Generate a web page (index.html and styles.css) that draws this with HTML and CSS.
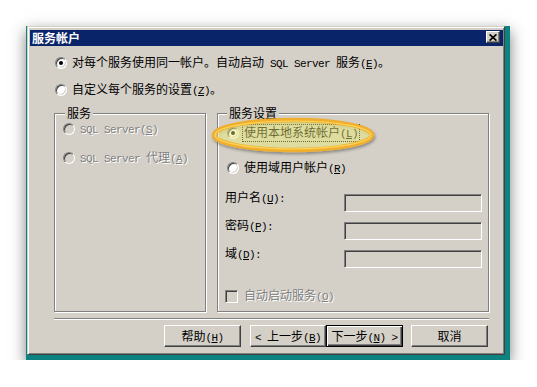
FILE: index.html
```html
<!DOCTYPE html>
<html>
<head>
<meta charset="utf-8">
<link rel="stylesheet" href="styles.css">
</head>
<body>
<div class="frame">
  <div class="dialog">
    <div class="titlebar">
      <span class="title">服务帐户</span>
      <span class="close"><svg width="8" height="7" viewBox="0 0 8 7"><path d="M0.6 0.4 L7.4 6.6 M7.4 0.4 L0.6 6.6" stroke="#000" stroke-width="1.7" fill="none"/></svg></span>
    </div>
    <div class="content">
      <div class="row top-row first"><span class="radio checked"></span><span class="lbl">对每个服务使用同一帐户。自动启动<span class="lat"> SQL Server </span>服务<span class="lat">(<u>E</u>)</span>。</span></div>
      <div class="row top-row second"><span class="radio"></span><span class="lbl">自定义每个服务的设置<span class="lat">(<u>Z</u>)</span>。</span></div>

      <div class="groups">
        <fieldset class="group g-left">
          <legend>服务</legend>
          <div class="row dis l1"><span class="radio"></span><span class="lbl"><span class="lat">SQL Server(<u>S</u>)</span></span></div>
          <div class="row dis l2"><span class="radio"></span><span class="lbl"><span class="lat">SQL Server </span>代理<span class="lat">(<u>A</u>)</span></span></div>
        </fieldset>
        <fieldset class="group g-right">
          <legend>服务设置</legend>
          <div class="row r1"><span class="radio checked"></span><span class="lbl focus">使用本地系统帐户<span class="lat">(<u>L</u>)</span></span></div>
          <div class="row r2"><span class="radio"></span><span class="lbl">使用域用户帐户<span class="lat">(<u>R</u>)</span></span></div>
          <div class="field f1"><span class="flabel">用户名<span class="lat">(<u>U</u>):</span></span><span class="input"></span></div>
          <div class="field"><span class="flabel">密码<span class="lat">(<u>P</u>):</span></span><span class="input"></span></div>
          <div class="field"><span class="flabel">域<span class="lat">(<u>D</u>):</span></span><span class="input"></span></div>
          <div class="row dis chk-row"><span class="check"></span><span class="lbl">自动启动服务<span class="lat">(<u>O</u>)</span></span></div>
        </fieldset>
      </div>

      <div class="sep"></div>

      <div class="buttons">
        <span class="btn">帮助<span class="lat">(<u>H</u>)</span></span>
        <span class="btn back"><span class="lat">&lt; </span>上一步<span class="lat">(<u>B</u>)</span></span>
        <span class="btn default">下一步<span class="lat">(<u>N</u>) &gt;</span></span>
        <span class="btn cancel">取消</span>
      </div>
    </div>

    <svg class="highlight" width="170" height="44" viewBox="0 0 170 44">
      <defs>
        <filter id="sh" x="-10%" y="-30%" width="120%" height="160%">
          <feDropShadow dx="1" dy="2" stdDeviation="1.5" flood-color="#000" flood-opacity="0.35"/>
        </filter>
      </defs>
      <ellipse cx="85" cy="21" rx="79" ry="15" fill="rgba(255,255,120,0.38)" stroke="#f0ae2e" stroke-width="4.5" filter="url(#sh)"/>
      <ellipse cx="85" cy="21" rx="78" ry="14" fill="none" stroke="#ffd65a" stroke-width="1.2"/>
    </svg>
  </div>
</div>
</body>
</html>
```

FILE: styles.css
```css
* { box-sizing: border-box; }
html, body { margin: 0; background: #fff; }
body {
  font-family: "Noto Sans CJK SC", "Noto Sans", sans-serif;
  font-size: 12px;
  color: #000;
}
.lat {
  font-family: "Liberation Mono", monospace;
  font-size: 11px;
  letter-spacing: -0.6px;
}
u { text-underline-offset: 1px; }

.frame {
  margin: 26px 0 0 26px;
  width: 484px;
  height: 334px;
  background: #0d8381;
  padding: 0 5px 5px 1px;
  box-shadow: 0 5px 14px rgba(0,0,0,0.5);
}
.dialog {
  position: relative;
  width: 478px;
  height: 329px;
  background: #d4d0c8;
  border: 1px solid;
  border-color: #d4d0c8 #404040 #404040 #d4d0c8;
  box-shadow: inset 1px 1px #fff, inset -1px -1px #808080;
  padding: 3px 1px 0 2px;
  display: flex;
  flex-direction: column;
}
.titlebar {
  flex: none;
  height: 16px;
  background: #0a246a;
  display: flex;
  align-items: flex-start;
  justify-content: space-between;
}
.title {
  color: #fff;
  font-weight: bold;
  line-height: 16px;
  padding-left: 2px;
}
.close {
  width: 14px;
  height: 12px;
  margin: 1px 3px 0 0;
  background: #d4d0c8;
  border: 1px solid;
  border-color: #fff #404040 #404040 #fff;
  box-shadow: inset -1px -1px #808080;
  display: flex;
  align-items: center;
  justify-content: center;
}
.close svg { display: block; }

.content {
  display: flex;
  flex-direction: column;
  padding: 9px 14px 0 24px;
}
.row {
  display: flex;
  align-items: center;
  height: 16px;
  line-height: 16px;
  white-space: nowrap;
}
.top-row { margin-left: 1px; }
.top-row.second { margin-top: 11px; }

.radio {
  flex: none;
  position: relative;
  width: 12px;
  height: 12px;
  border-radius: 50%;
  border: 1px solid;
  border-color: #808080 #fff #fff #808080;
  background: #fff;
  box-shadow: inset 1px 1px #404040, inset -1px -1px #d4d0c8;
}
.radio.checked::after {
  content: "";
  position: absolute;
  left: 3px;
  top: 3px;
  width: 4px;
  height: 4px;
  border-radius: 50%;
  background: #000;
}
.lbl {
  margin-left: 4px;
  padding: 0 1px;
  line-height: 14px;
}
.focus { outline: 1px dotted #000; outline-offset: 0; }

.dis { color: #808080; text-shadow: 1px 1px 0 #fff; }
.dis .radio { background: #d4d0c8; }

.groups {
  display: flex;
  gap: 11px;
  margin-top: 7px;
  height: 207px;
}
.group {
  margin: 0;
  padding: 0;
  min-width: 0;
  border: 1px solid #808080;
  box-shadow: inset 1px 1px #fff, 1px 1px #fff;
  height: 207px;
}
.group legend {
  margin-left: 2px;
  padding: 0 2px;
  line-height: 16px;
  background: #d4d0c8;
}
.g-left { width: 152px; padding-left: 8px; }
.g-right { width: 272px; padding-left: 7px; }

.l2 { margin-top: 13px; }

.r1 { margin-top: 4px; margin-left: 2px; }
.r2 { margin-top: 19px; margin-left: 2px; }

.field {
  display: flex;
  align-items: flex-start;
  height: 23px;
  margin-top: 5px;
}
.field.f1 { margin-top: 13px; }
.flabel {
  width: 119px;
  line-height: 16px;
  white-space: nowrap;
}
.input {
  width: 138px;
  height: 18px;
  margin-top: 5px;
  background: #d4d0c8;
  border: 1px solid;
  border-color: #808080 #fff #fff #808080;
  box-shadow: inset 1px 1px #404040, inset -1px -1px #d4d0c8;
}

.chk-row { margin-top: 20px; }
.check {
  flex: none;
  width: 13px;
  height: 13px;
  border: 1px solid;
  border-color: #808080 #fff #fff #808080;
  box-shadow: inset 1px 1px #404040, inset -1px -1px #d4d0c8;
  background: #d4d0c8;
}
.chk-row .lbl { margin-left: 5px; }

.sep {
  margin-top: 6px;
  height: 2px;
  border-top: 1px solid #808080;
  border-bottom: 1px solid #fff;
}

.buttons {
  display: flex;
  justify-content: flex-end;
  margin-top: 5px;
  margin-right: 1px;
}
.btn {
  display: block;
  width: 77px;
  height: 22px;
  text-align: center;
  white-space: pre;
  background: #d4d0c8;
  border: 1px solid;
  border-color: #fff #404040 #404040 #fff;
  box-shadow: inset -1px -1px #808080;
  line-height: 19px;
}
.btn.back { width: 76px; margin-left: 9px; }
.btn.default {
  border: 1px solid #000;
  box-shadow: inset 1px 1px #fff, inset -1px -1px #404040, inset -2px -2px #808080;
}
.btn.cancel { margin-left: 8px; }

.highlight {
  position: absolute;
  left: 180px;
  top: 87px;
  overflow: visible;
}
```
